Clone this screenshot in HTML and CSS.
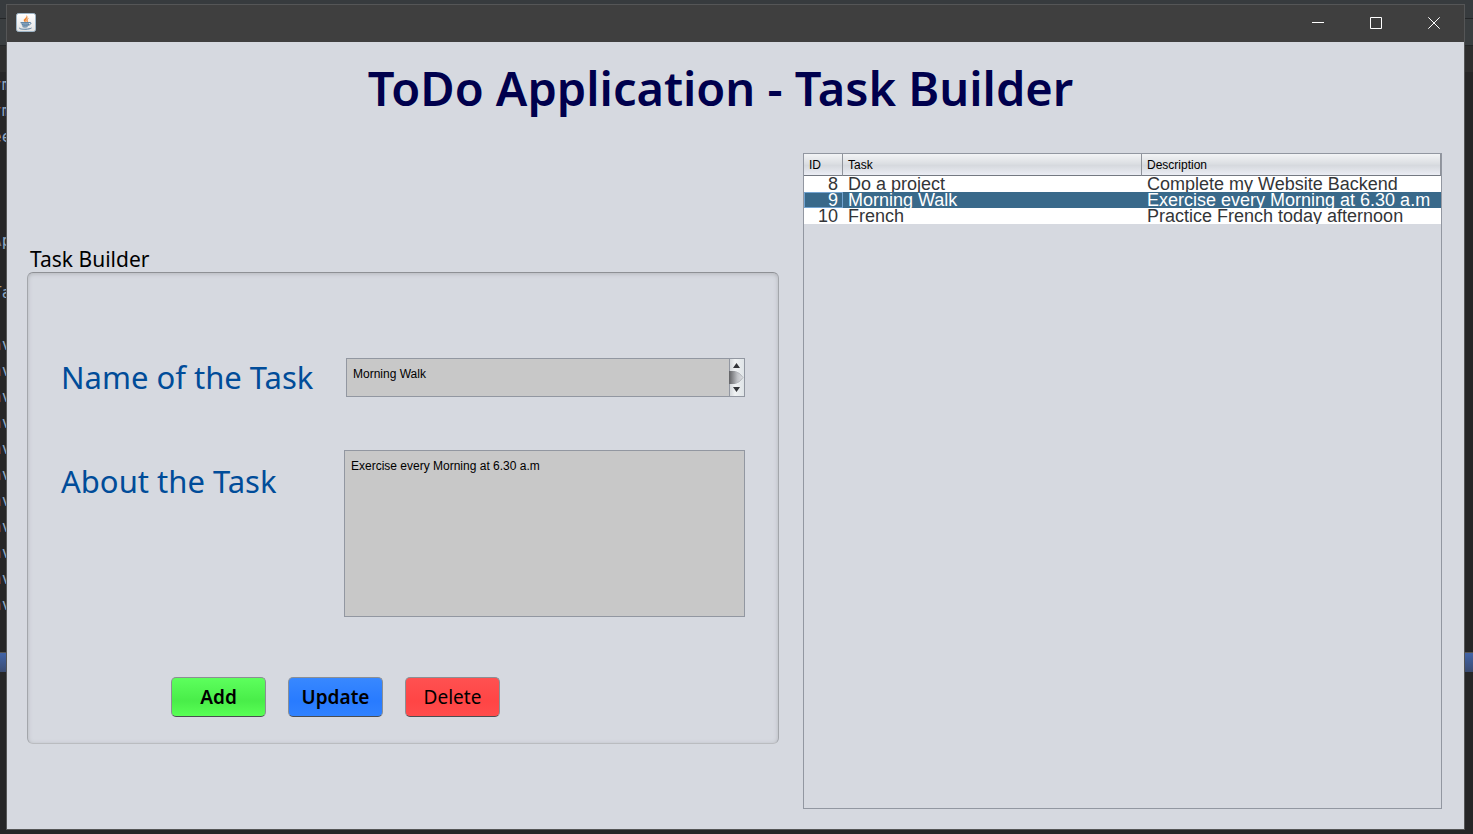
FILE: index.html
```html
<!DOCTYPE html>
<html lang="en">
<head>
<meta charset="utf-8">
<title>ToDo Application - Task Builder</title>
<link rel="stylesheet" href="styles.css">
</head>
<body class="desktop">
<div class="editor" aria-hidden="true">
  <div class="editor-toolbar"></div>
  <div class="editor-tabs"></div>
  <div class="editor-crumbs"></div>
  <div class="editor-status"></div>
  <pre class="code code-imports"><b>r</b>m
<b>r</b>m
<i>e</i>e</pre>
  <pre class="code code-class"><u>A</u>p

<i>T</i>a

<b>n</b>v
<b>n</b>v
<b>n</b>v
<b>n</b>v
<b>n</b>v
<b>n</b>v
<b>n</b>v
<b>n</b>v
<b>n</b>v
<b>n</b>v
<b>n</b>v</pre>
</div>
<div class="window">
  <header class="titlebar">
    <svg class="app-icon" width="20" height="20" viewBox="0 0 20 20" aria-hidden="true">
      <defs><linearGradient id="tile" x1="0" y1="0" x2="0" y2="1"><stop offset="0" stop-color="#fff"/><stop offset="1" stop-color="#e2e2e2"/></linearGradient></defs>
      <rect x=".5" y=".5" width="19" height="18" rx="2" fill="url(#tile)" stroke="#9db4c6"/>
      <path d="M10.600 2.500c1.200 2-3 3.200-2.700 4.900.2 1 1.200 1.400 1.700 2.300.2-1.300-.5-1.900.4-2.900C10.500 5.800 12.300 4.600 10.600 2.500zM12.600 5.200c-1.800.7-2.700 1.800-2.100 2.900.3.600.6.900.2 1.700 1.400-.8 1.200-1.600.8-2.300-.4-.8.200-1.400 1.100-2.300z" fill="#ee7a1c" stroke="#f0a060" stroke-width=".4"/>
      <path d="M5 9.600h8v2.200q-1 1.800-2.500 2H8Q5.300 13 5 9.600z" fill="#8fa9c0"/>
      <path d="M4.500 9.700h9M6 11.600c1.800.7 5 .7 7 0M6.500 13.700c2 .5 3.400.5 5 0M13.200 9.500c2.500-.6 2.300 2-.7 2.700M3.500 14.800c-.8 1.800 9 2 12 .2" fill="none" stroke="#52799d"/>
    </svg>
    <div class="window-controls">
      <button class="control" type="button" aria-label="Minimize"><svg width="12" height="12" viewBox="0 0 12 12"><path d="M0 5.500h12"/></svg></button>
      <button class="control" type="button" aria-label="Maximize"><svg width="12" height="12" viewBox="0 0 12 12"><path d="M.5.500h11v11H.5z"/></svg></button>
      <button class="control" type="button" aria-label="Close"><svg width="12" height="12" viewBox="0 0 12 12"><path d="M.3.300l11.400 11.400M11.700.300L.3 11.700"/></svg></button>
    </div>
  </header>
  <main class="content">
    <h1 class="title">ToDo Application - Task Builder</h1>
    <div class="columns">
      <section class="builder">
        <h2 class="builder-title">Task Builder</h2>
        <form class="panel">
          <div class="field">
            <label class="label" for="task-name">Name of the Task</label>
            <div class="name-box">
              <textarea class="input name-input" id="task-name" rows="1">Morning Walk</textarea>
              <div class="scrollbar" aria-hidden="true">
                <svg width="15" height="37" viewBox="0 0 15 37">
                  <defs>
                    <linearGradient id="track"><stop offset="0" stop-color="#d0d4d8"/><stop offset=".4" stop-color="#f0f2f3"/><stop offset="1" stop-color="#dfe4e7"/></linearGradient>
                    <linearGradient id="thumb"><stop offset="0" stop-color="#606164"/><stop offset=".6" stop-color="#bfc1c5"/><stop offset="1" stop-color="#e0e2e6"/></linearGradient>
                  </defs>
                  <rect width="15" height="37" fill="url(#track)"/>
                  <path d="M.5 0v37" stroke="#9297a1"/>
                  <path d="M0 12h6q5 1.500 8 6.500-3 5-8 6.500H0z" fill="url(#thumb)"/>
                  <path d="M6 12.500q5 1 8 6-3 5-8 6" fill="none" stroke="#b4b7bc"/>
                  <path d="M7.500 4L11 9H4zM7.500 33L11 28H4z" fill="#333539"/>
                </svg>
              </div>
            </div>
          </div>
          <div class="field field-about">
            <label class="label" for="task-about">About the Task</label>
            <textarea class="input about-input" id="task-about">Exercise every Morning at 6.30 a.m</textarea>
          </div>
          <div class="actions">
            <button class="action add" type="button">Add</button>
            <button class="action update" type="button">Update</button>
            <button class="action delete" type="button">Delete</button>
          </div>
        </form>
      </section>
      <section class="task-list">
        <table class="tasks">
          <colgroup><col class="col-id"><col><col></colgroup>
          <thead><tr><th scope="col">ID</th><th scope="col">Task</th><th scope="col">Description</th></tr></thead>
          <tbody>
            <tr><td><div class="cell">8</div></td><td><div class="cell">Do a project</div></td><td><div class="cell">Complete my Website Backend</div></td></tr>
            <tr class="selected"><td><div class="cell">9</div></td><td><div class="cell">Morning Walk</div></td><td><div class="cell">Exercise every Morning at 6.30 a.m</div></td></tr>
            <tr><td><div class="cell">10</div></td><td><div class="cell">French</div></td><td><div class="cell">Practice French today afternoon</div></td></tr>
          </tbody>
        </table>
      </section>
    </div>
  </main>
</div>
</body>
</html>
```

FILE: styles.css
```css
* { box-sizing: border-box; }
.desktop {
  margin: 0;
  min-height: 100vh;
  padding: 4px 8px 4px 6px;
  display: flex;
  background: #262627;
  font-family: "Liberation Sans", Arial, sans-serif;
}
/* Code editor visible around the window edges */
.editor { position: absolute; inset: 0; overflow: hidden; }
.editor-toolbar { height: 19px; background: #373b3e; border-bottom: 1px solid #242628; }
.editor-tabs { height: 27px; background: #3a3e40; border-bottom: 1px solid #242628; }
.editor-crumbs { height: 26px; background: #2e2e2e; }
.editor-status {
  position: absolute; left: 0; right: 0; top: 652px; height: 20px;
  background: linear-gradient(#4264a8, #3a4b70); border-top: 1px solid #555;
}
.code {
  position: absolute; left: -8px; margin: 0;
  font: 16px/26px "DejaVu Sans Mono", monospace; color: #8fa9c4;
}
.code b { font-weight: 400; color: #8a5530; }
.code i { font-style: normal; color: #b29a65; }
.code u { text-decoration: none; color: #777; }
.code-imports { top: 72px; }
.code-class { top: 228px; }

.window {
  position: relative;
  flex: 1;
  display: flex;
  flex-direction: column;
  border: 1px solid #555657;
  background: #d6d9e0;
}
.titlebar {
  height: 37px;
  padding: 0 1px 2px 9px;
  display: flex;
  align-items: center;
  justify-content: space-between;
  background: #3f3f3f;
}
.window-controls { display: flex; align-self: stretch; }
.control { width: 58px; padding: 0; border: 0; background: none; display: grid; place-items: center; }
.control svg { fill: none; stroke: #fff; }

.content { flex: 1; display: flex; flex-direction: column; padding: 12px 22px 20px 20px; }
.title {
  margin: 0 0 31px;
  padding-right: 28px;
  font: 600 47px/68px "Noto Sans", "Open Sans", sans-serif;
  text-align: center;
  color: #00004d;
}
.columns { flex: 1; display: grid; grid-template-columns: 752fr 639fr; gap: 24px; }

.builder { padding-top: 93px; }
.builder-title { margin: 0 3px; font: 400 21px/26px "Noto Sans", "Open Sans", sans-serif; color: #000; }
.panel {
  padding: 85px 33px 26px;
  border: 1px solid #a3a6ab;
  border-top-color: #8e9095;
  border-bottom-color: #babcc0;
  border-radius: 6px;
  box-shadow: inset 0 1px 4px #b4b6bb;
}
.field { display: flex; }
.field-about { margin-top: 53px; }
.label {
  flex: 1;
  font: 400 31px/39px "Noto Sans", "Open Sans", sans-serif;
  color: #004c99;
  white-space: nowrap;
}
.field-about .label { padding-top: 12px; }
.input {
  display: block;
  margin: 0;
  border: 1px solid #9297a1;
  background: #c8c8c8;
  color: #000;
  font: 12px/16px "Liberation Sans", Arial, sans-serif;
  resize: none;
  outline: 0;
}
.name-box { width: 399px; height: 39px; display: flex; border: 1px solid #9297a1; }
.name-input { flex: 1; min-width: 0; border: 0; padding: 7px 6px; overflow: hidden; }
.scrollbar { width: 15px; height: 37px; display: flex; }
.about-input { width: 401px; height: 167px; padding: 7px 6px; }

.actions { display: flex; gap: 22px; margin: 60px 0 0 110px; }
.action {
  width: 95px;
  height: 40px;
  padding: 0;
  border: 1px solid #8b8f94;
  border-bottom-color: #4b4e52;
  border-radius: 5px;
  font: 600 19px/24px "Noto Sans", "Open Sans", sans-serif;
  color: #000;
}
.add { background: linear-gradient(#5dff5d, #49ed49 60%, #59ff55); }
.update { background: linear-gradient(#3888ff, #287bff 60%, #3182ff); }
.delete { background: linear-gradient(#ff5151, #ff4545 60%, #ff4c4c); font-weight: 400; }

.task-list { border: 1px solid #9297a1; }
.tasks { width: 100%; table-layout: fixed; border-collapse: separate; border-spacing: 0; }
.col-id { width: 39px; }
.tasks th {
  height: 22px;
  padding: 0 5px;
  border-right: 1px solid #8f939b;
  border-bottom: 1px solid #747982;
  background: linear-gradient(#f3f4f6, #dcdfe3 45%, #d6d9de 55%, #ebedf4);
  font: 400 12px/16px "Liberation Sans", Arial, sans-serif;
  text-align: left;
  color: #000;
}
.tasks td { padding: 0; background: #fff; }
.cell {
  height: 16px;
  padding: 0 5px;
  overflow: hidden;
  white-space: nowrap;
  font-size: 18px;
  line-height: 16px;
  color: #333538;
}
.tasks td:first-child .cell { text-align: right; }
.tasks .selected td { background: #39698a; }
.selected .cell { color: #fff; }
.selected td:first-child { box-shadow: inset 0 0 0 1px #73a4d1; }
```
